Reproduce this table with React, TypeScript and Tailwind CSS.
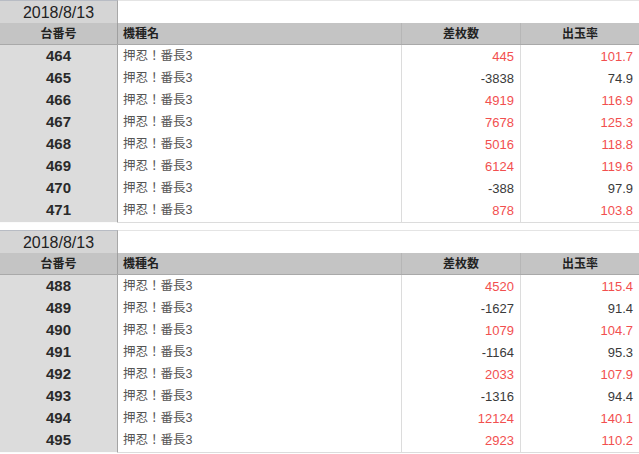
import React from "react";

type Row = { no: number; diff: number; rate: string };

const t1: Row[] = [
  { no: 464, diff: 445, rate: "101.7" },
  { no: 465, diff: -3838, rate: "74.9" },
  { no: 466, diff: 4919, rate: "116.9" },
  { no: 467, diff: 7678, rate: "125.3" },
  { no: 468, diff: 5016, rate: "118.8" },
  { no: 469, diff: 6124, rate: "119.6" },
  { no: 470, diff: -388, rate: "97.9" },
  { no: 471, diff: 878, rate: "103.8" },
];

const t2: Row[] = [
  { no: 488, diff: 4520, rate: "115.4" },
  { no: 489, diff: -1627, rate: "91.4" },
  { no: 490, diff: 1079, rate: "104.7" },
  { no: 491, diff: -1164, rate: "95.3" },
  { no: 492, diff: 2033, rate: "107.9" },
  { no: 493, diff: -1316, rate: "94.4" },
  { no: 494, diff: 12124, rate: "140.1" },
  { no: 495, diff: 2923, rate: "110.2" },
];

const grid = "grid grid-cols-[118px_284px_119px_1fr]";

function Table({ rows }: { rows: Row[] }) {
  return (
    <div className="flex flex-col">
      <div className={`${grid} h-[23px]`}>
        <div className="flex items-center justify-center bg-[#d5d5d5] border-t border-t-[#b8bcc4] border-r border-r-[#a8a8a8] text-[16px] text-[#222]">
          2018/8/13
        </div>
        <div className="col-span-3 bg-white border-t border-t-[#e4e4e4]" />
      </div>
      <div className={`${grid} h-[22px] bg-[#c4c4c4] border-b border-b-[#a9a9a9] text-[12px] font-bold text-[#222]`}>
        <div className="flex items-center justify-center border-r border-r-[#a0a0a0]">台番号</div>
        <div className="flex items-center pl-[5px] border-r border-r-[#b6b6b6]">機種名</div>
        <div className="flex items-center justify-center border-r border-r-[#b6b6b6]">差枚数</div>
        <div className="flex items-center justify-center">出玉率</div>
      </div>
      {rows.map((r) => {
        const red = r.diff > 0;
        const c = red ? "text-[#f24f4f]" : "text-[#3a3a3a]";
        return (
          <div key={r.no} className={`${grid} h-[22px]`}>
            <div className="flex items-center justify-center bg-[#dcdcdc] border-r border-r-[#a4a4a4] border-b border-b-[#fbfbfb] text-[15px] font-bold text-[#2a2a2a]">
              {r.no}
            </div>
            <div className="flex items-center pl-[5px] bg-white border-r border-r-[#dcdcdc] border-b border-b-[#dcdcdc] text-[12.5px] text-[#555]">
              押忍！番長3
            </div>
            <div className={`flex items-center justify-end pr-[6px] bg-white border-r border-r-[#dcdcdc] border-b border-b-[#dcdcdc] text-[13px] ${c}`}>
              {r.diff}
            </div>
            <div className={`flex items-center justify-end pr-[6px] bg-white border-b border-b-[#dcdcdc] text-[13px] ${c}`}>
              {r.rate}
            </div>
          </div>
        );
      })}
    </div>
  );
}

export default function App() {
  return (
    <div
      className="w-[639px] h-[454px] overflow-hidden bg-white flex flex-col gap-[9px]"
      style={{ fontFamily: '"Liberation Sans", "Noto Sans CJK JP", sans-serif' }}
    >
      <Table rows={t1} />
      <Table rows={t2} />
    </div>
  );
}
